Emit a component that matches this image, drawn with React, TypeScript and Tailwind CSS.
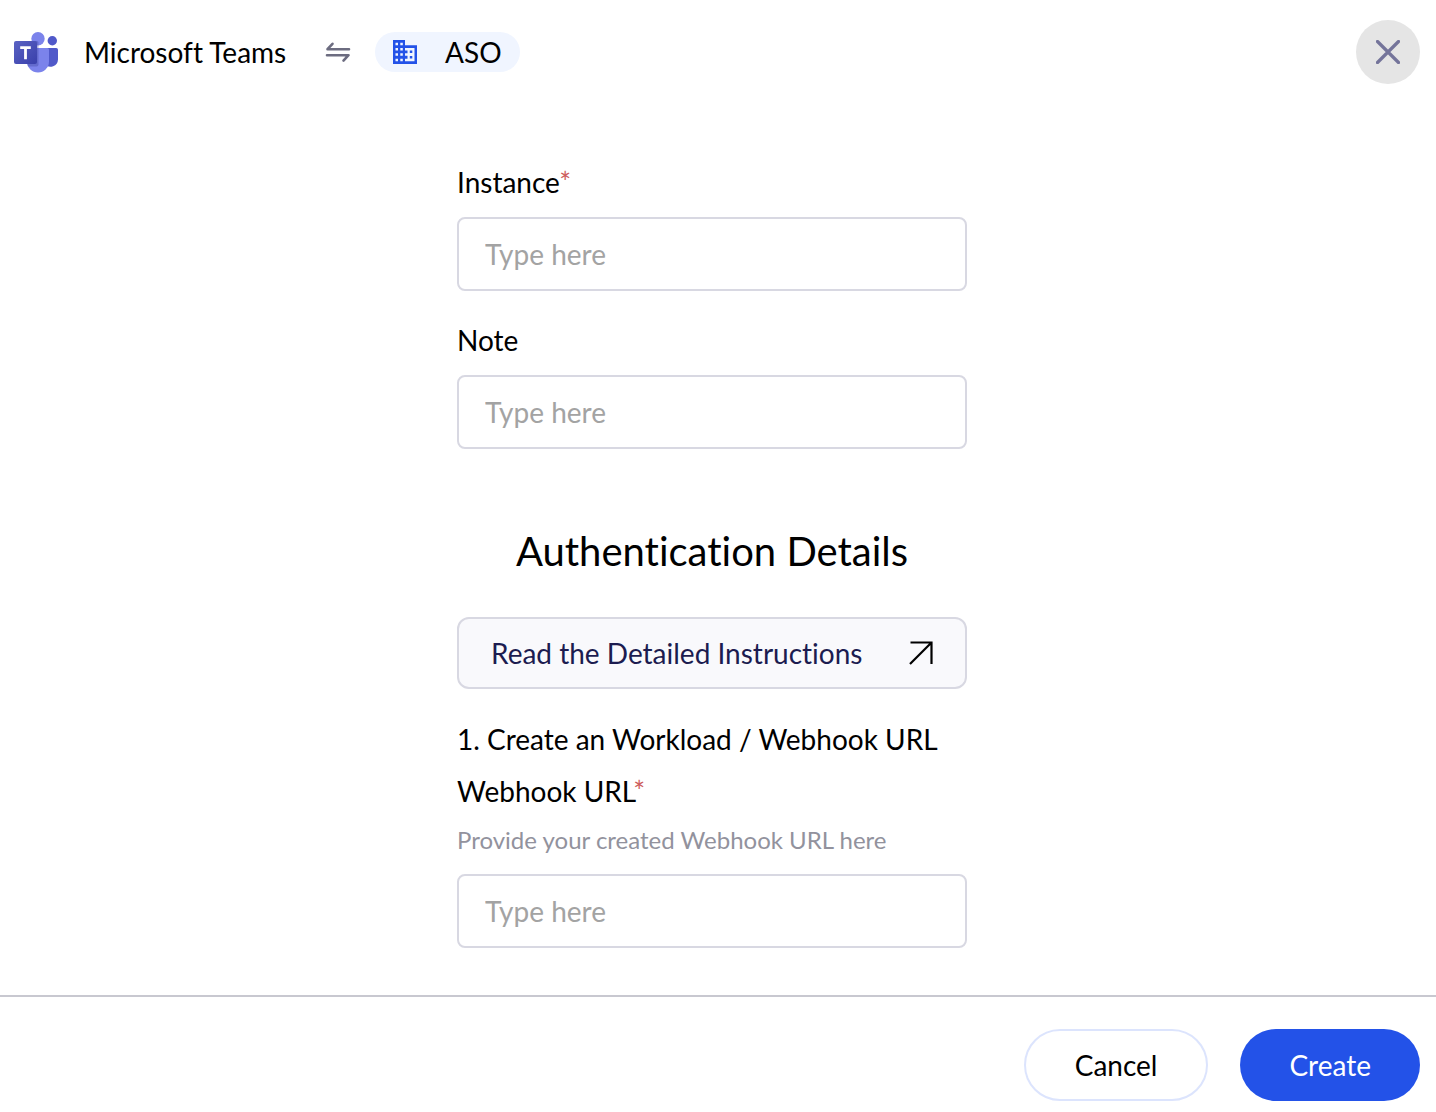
import React from "react";

function TeamsLogo() {
  return (
    <svg viewBox="0 0 44 42" className="h-[42px] w-11" role="img" aria-label="Microsoft Teams logo">
      <defs>
        <linearGradient id="tile" x1="0" y1="0" x2="1" y2="1">
          <stop offset="0" stopColor="#5a62c3" />
          <stop offset="1" stopColor="#3940ab" />
        </linearGradient>
      </defs>
      <circle cx="38.3" cy="9.7" r="4.7" fill="#5059c9" />
      <path d="M31 17h11.200q1.800 0 1.800 1.800v9.700a7.600 7.600 0 0 1-13 5z" fill="#5059c9" />
      <circle cx="24" cy="7.700" r="6.700" fill="#7b83eb" />
      <path d="M14 17h19.200q1.800 0 1.800 1.800V30.500a11 11 0 0 1-22 0V18q0-1 1-1z" fill="#7b83eb" />
      <path d="M17 10h6q1.500 0 1.500 1.500v22q0 2-2 2H14q-1-2-1-5V10z" fill="#4148a0" opacity="0.4" />
      <rect x="0" y="10" width="23" height="23" rx="2" fill="url(#tile)" />
      <path d="M6.200 15.300h10.600v2.600h-3.900v10.400h-2.800V17.900H6.200z" fill="#fff" />
    </svg>
  );
}

function SwapIcon() {
  return (
    <svg viewBox="0 0 26 22" className="h-[22px] w-[26px]" fill="none" stroke="#6c6c80" strokeWidth="2.600" strokeLinecap="round" strokeLinejoin="round" aria-hidden="true">
      <path d="M24 8.200H2.500L7.500 2.800" />
      <path d="M2 14.200h21.500L18.500 19.600" />
    </svg>
  );
}

function BuildingIcon() {
  return (
    <svg viewBox="0 0 24 24" className="h-6 w-6" fill="#2352e8" fillRule="evenodd" aria-hidden="true">
      <path d="M0 0h12v5.300h12V24H0zM2.500 2.700v2.500H5V2.700zM7.300 2.700v2.500h2.500V2.700zM2.500 8v2.500H5V8zM7.300 8v2.500h2.500V8zM2.500 13.300v2.500H5v-2.500zM7.300 13.300v2.500h2.500v-2.500zM2.500 18.700v2.500H5v-2.500zM7.300 18.700v2.500h2.500v-2.500zM12 8v2.500h2.500v2.800H12v2.500h2.500v2.900H12v2.500h9.500V8zM16.800 10.500h2.500V13h-2.500zM16.800 16h2.500v2.500h-2.500z" />
    </svg>
  );
}

type FieldProps = {
  id: string;
  label: string;
  required?: boolean;
  hint?: string;
};

function Field({ id, label, required, hint }: FieldProps) {
  return (
    <div className="flex flex-col">
      <label htmlFor={id} className="text-[28px] leading-10">
        {label}
        {required && <span className="text-[#cd5c5c]">*</span>}
      </label>
      {hint && (
        <p id={`${id}-hint`} className="mt-2.5 text-2xl leading-[38px] text-[#92929d]">
          {hint}
        </p>
      )}
      <input
        id={id}
        type="text"
        required={required}
        aria-describedby={hint ? `${id}-hint` : undefined}
        placeholder="Type here"
        className="mt-[15px] h-[74px] w-full rounded-lg border-2 border-[#d8d8e2] bg-white px-[26px] text-[28px] placeholder:text-[#a3a3a3]"
      />
    </div>
  );
}

export default function App() {
  return (
    <div className="flex min-h-screen flex-col bg-white font-['Lato',sans-serif] text-black [font-variant-ligatures:none]">
      <header className="flex items-center justify-between py-5 pr-4 pl-3.5">
        <div className="flex items-center gap-6">
          <TeamsLogo />
          <h1 className="min-w-[219px] pl-0.5 text-[28px] leading-10">Microsoft Teams</h1>
          <SwapIcon />
          <div className="flex h-10 items-center gap-7 rounded-full bg-[#f0f5ff] px-[18px]">
            <BuildingIcon />
            <span className="text-[28px] leading-10">ASO</span>
          </div>
        </div>
        <button type="button" aria-label="Close" className="flex size-16 items-center justify-center rounded-full bg-[#e5e5e5]">
          <svg viewBox="0 0 24 24" className="size-6" fill="none" stroke="#74749a" strokeWidth="3.200" strokeLinecap="round" aria-hidden="true">
            <path d="M1.500 1.500l21 21M22.500 1.500l-21 21" />
          </svg>
        </button>
      </header>

      <main className="flex flex-1 justify-center pt-[58px] pr-3 pb-10">
        <form id="connection" className="flex w-full max-w-[510px] flex-col">
          <div className="flex flex-col gap-[29px]">
            <Field id="instance" label="Instance" required />
            <Field id="note" label="Note" />
          </div>
          <h2 className="mt-[78px] text-center text-[40px] leading-12">Authentication Details</h2>
          <a
            href="#instructions"
            className="mt-[42px] flex h-18 items-center justify-between rounded-xl border-2 border-[#d8d8e2] bg-[#f9f9fc] px-8 text-[28px] text-[#1c1c50]"
          >
            Read the Detailed Instructions
            <svg viewBox="0 0 24 24" className="size-6" fill="none" stroke="#000" strokeWidth="2.200" aria-hidden="true">
              <path d="M1 23L22.500 1.500M1.500 1.500h21V23" />
            </svg>
          </a>
          <p className="mt-[30px] mb-3 text-[28px] leading-10">1. Create an Workload / Webhook URL</p>
          <Field id="webhook" label="Webhook URL" required hint="Provide your created Webhook URL here" />
        </form>
      </main>

      <footer className="flex justify-end gap-8 border-t-2 border-[#c8c8d0] px-4 pt-8 pb-[11px] text-[28px]">
        <button type="button" className="h-18 rounded-full border-2 border-[#dce4fd] bg-white px-[49px]">
          Cancel
        </button>
        <button type="submit" form="connection" className="h-18 rounded-full bg-[#2352e8] px-[49px] text-white">
          Create
        </button>
      </footer>
    </div>
  );
}
